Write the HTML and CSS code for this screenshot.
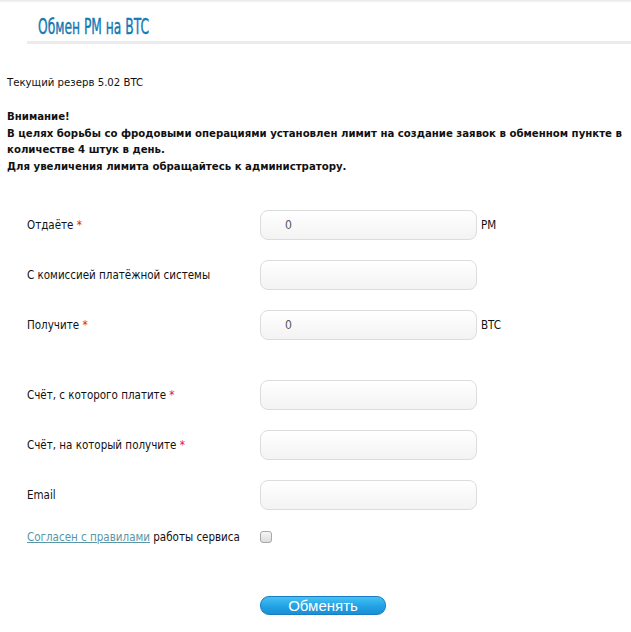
FILE: index.html
```html
<!DOCTYPE html>
<html lang="ru">
<head>
<meta charset="utf-8">
<title>Обмен PM на BTC</title>
<link rel="stylesheet" href="styles.css">
</head>
<body>
<div class="page">
  <header class="head">
    <h1 class="title"><span class="title-text">Обмен PM на BTC</span></h1>
  </header>
  <div class="content">
    <p class="reserve">Текущий резерв 5.02 BTC</p>
    <p class="warn">Внимание!<br>В целях борьбы со фродовыми операциями установлен лимит на создание заявок в обменном пункте в количестве 4 штук в день.<br>Для увеличения лимита обращайтесь к администратору.</p>
    <form class="form">
      <div class="grid">
        <label class="lbl">Отдаёте <span class="req">*</span></label>
        <input class="inp" type="text" value="0">
        <span class="unit">PM</span>

        <label class="lbl">С комиссией платёжной системы</label>
        <input class="inp" type="text" value="">
        <span class="unit"></span>

        <label class="lbl">Получите <span class="req">*</span></label>
        <input class="inp" type="text" value="0">
        <span class="unit">BTC</span>
      </div>

      <div class="grid second">
        <label class="lbl">Счёт, с которого платите <span class="req">*</span></label>
        <input class="inp" type="text" value="">
        <span class="unit"></span>

        <label class="lbl">Счёт, на который получите <span class="req">*</span></label>
        <input class="inp" type="text" value="">
        <span class="unit"></span>

        <label class="lbl">Email</label>
        <input class="inp" type="text" value="">
        <span class="unit"></span>

        <label class="lbl agree"><a href="#" class="link">Согласен с правилами</a> работы сервиса</label>
        <span class="box"></span>
        <span class="unit"></span>

        <div class="submit-row"><button type="button" class="btn">Обменять</button></div>
      </div>
    </form>
  </div>
</div>
</body>
</html>
```

FILE: styles.css
```css
* { box-sizing: border-box; }
html, body { margin: 0; padding: 0; background: #fff; }
body {
  font-family: "DejaVu Sans Condensed", "DejaVu Sans", sans-serif;
  color: #111;
}
.page {
  width: 631px;
  min-height: 632px;
  box-shadow: inset 0 3px 3px -2px rgba(0,0,0,0.12);
}
.head {
  padding: 0 0 0 27px;
}
.title {
  margin: 0;
  padding: 13px 0 0 11px;
  height: 44px;
  border-bottom: 3px solid #ebebeb;
  font-size: 22px;
  line-height: 27px;
  font-weight: normal;
  color: #1478b4;
  white-space: nowrap;
}
.title-text {
  display: inline-block;
  transform: scaleX(0.62);
  transform-origin: left center;
  -webkit-text-stroke: 0.4px #1478b4;
}
.content {
  padding: 0 7px;
}
.reserve {
  margin: 31px 0 0;
  font-size: 11.3px;
  line-height: 16px;
}
.warn {
  margin: 18px 0 0;
  font-size: 11.3px;
  line-height: 16.5px;
  font-weight: bold;
}
.form {
  margin: 35px 0 0 20px;
}
.grid {
  display: grid;
  grid-template-columns: 233px 217px auto;
  row-gap: 20px;
  align-items: center;
}
.second { margin-top: 40px; }
.lbl {
  font-size: 11.5px;
  white-space: nowrap;
}
.req { color: #e0201a; }
.inp {
  display: block;
  width: 217px;
  height: 30px;
  margin: 0;
  border: 1px solid #dcdcdc;
  border-radius: 8px;
  background: linear-gradient(#ffffff, #f3f3f3);
  padding: 0 0 0 24px;
  font-family: "DejaVu Sans Condensed", sans-serif;
  font-size: 12px;
  color: #555;
  outline: none;
}
.unit {
  padding-left: 4px;
  font-size: 11.5px;
}
.link {
  color: #5a96a6;
  text-decoration: underline;
}
.box {
  display: block;
  width: 12px;
  height: 12px;
  border: 1px solid #a8a8a8;
  border-radius: 3px;
  background: linear-gradient(#f6f6f6, #dcdcdc);
}
.submit-row {
  grid-column: 2 / 4;
  padding-top: 32px;
}
.btn {
  display: block;
  width: 126px;
  height: 19px;
  padding: 0;
  border: 1px solid #1a7cc4;
  border-radius: 9px;
  background: linear-gradient(#45c1f3, #21a2e4 55%, #1b8fd4);
  color: #fff;
  font-family: "Liberation Sans", Arial, sans-serif;
  font-size: 15px;
  line-height: 16px;
  cursor: pointer;
}
```
